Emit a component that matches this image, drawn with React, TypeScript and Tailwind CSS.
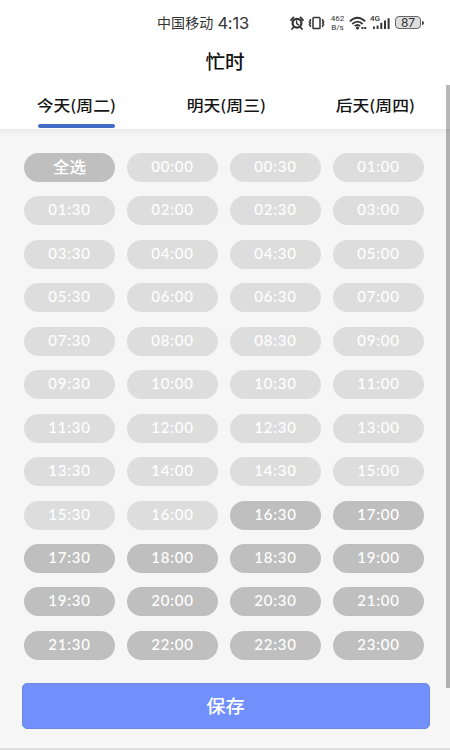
import { useState } from 'react';
import clsx from 'clsx';

const TABS = ['今天(周二)', '明天(周三)', '后天(周四)'];

// Premier créneau encore disponible aujourd'hui (16:30)
const FIRST_FREE = 33;

const SLOTS = Array.from({ length: 47 }, (_, i) => {
  const hour = String(Math.floor(i / 2)).padStart(2, '0');
  return { label: `${hour}:${i % 2 ? '30' : '00'}`, disabled: i < FIRST_FREE };
});

function StatusBar() {
  return (
    <div className="h-[45px] pl-[157px] pr-[26px] flex items-center justify-between text-[#333]">
      <div className="flex items-center gap-[4px] leading-none">
        <span className="mb-[2px] text-[14px] tracking-[0.1px]">中国移动</span>
        <span className="mt-[2px] font-['Inter'] text-[16.5px] tracking-[-0.2px]">4:13</span>
      </div>
      <div className="flex items-center">
        {/* Réveil */}
        <svg className="w-[14px] h-[14px] mr-[4px]" viewBox="0 0 14 14" fill="none" stroke="currentColor" strokeLinecap="round">
          <circle cx="7" cy="7.2" r="4.4" strokeWidth="2.3" />
          <path d="M1 4.2 3.5 1.4M13 4.2 10.5 1.4M3.3 11.5 2 13M10.7 11.5 12 13" strokeWidth="1.8" />
          <path d="M6.6 5v2.6l2.1 1.2" strokeWidth="1.4" />
        </svg>
        {/* Vibreur */}
        <svg className="w-[17px] h-[14px] mr-[5px]" viewBox="0 0 17 14" fill="none" stroke="currentColor" strokeWidth="1.5">
          <rect x="5" y="1.4" width="7" height="11.2" rx=".8" />
          <path d="M2.4 3v1.6l-1 1.2 1 1.2-1 1.2 1 1.2V11M14.6 3v1.6l1 1.2-1 1.2 1 1.2-1 1.2V11" />
        </svg>
        <div className="w-[15px] mr-[4px] font-['Roboto'] text-[8px] leading-[9px] text-center">
          <div>462</div>
          <div>B/s</div>
        </div>
        {/* Wi-Fi */}
        <svg className="w-[18px] h-[14px] mr-[3px]" viewBox="0 0 18 14" fill="none" stroke="currentColor" strokeWidth="1.8">
          <path d="M.8 5.4Q8.5-1.8 16.2 5.4M3.3 8Q8.5 3.2 13.7 8M5.7 10.2Q8.5 7.7 11.3 10.2" />
          <circle cx="8.5" cy="12" r="1.6" fill="currentColor" stroke="none" />
          <path d="M12.4 12h2M15.2 12h2" />
        </svg>
        {/* Réseau mobile */}
        <div className="relative w-[20px] h-[14px] mr-[5px]">
          <span className="absolute left-0 top-[-1px] font-['Roboto'] text-[8px] leading-[8px] font-medium">4G</span>
          <svg className="w-full h-full" viewBox="0 0 20 14" fill="currentColor">
            <path d="M3 10.5h1.9v2.5H3zM6.6 9.5h1.9V13H6.6zM10.3 6.8h2V13h-2zM14 4.5h2V13h-2zM17.6 2.3h2V13h-2z" />
          </svg>
        </div>
        <div className="w-[26px] h-[13px] border-[1.5px] border-[#666] rounded-[4px] bg-[#dedede] flex items-center justify-center font-['Inter'] text-[12px] leading-none">
          87
        </div>
        <div className="w-[2px] h-[4px] ml-px bg-[#444] rounded-r" />
      </div>
    </div>
  );
}

export default function App() {
  const [tab, setTab] = useState(0);
  const [selected, setSelected] = useState<string[]>([]);

  const toggle = (label: string) => {
    setSelected((prev) => (prev.includes(label) ? prev.filter((l) => l !== label) : [...prev, label]));
  };

  const selectAll = () => {
    const free = SLOTS.filter((s) => !s.disabled).map((s) => s.label);
    setSelected(selected.length === free.length ? [] : free);
  };

  return (
    <div className="relative w-[450px] h-[750px] overflow-hidden flex flex-col bg-[#f6f6f6] border-b-2 border-[#dedede] font-['Noto_Sans_CJK_SC',sans-serif]">
      {/* En-tête */}
      <header className="h-[129px] shrink-0 bg-white">
        <StatusBar />
        <h1 className="h-[35px] pb-[2px] flex items-center justify-center text-[19px] font-medium text-[#111]">
          <span className="scale-x-[1.03]">忙时</span>
        </h1>
        <nav className="h-[49px] pl-[38px] pr-[36px] flex justify-between">
          {TABS.map((label, i) => (
            <button key={label} onClick={() => setTab(i)} className="w-[77px] flex flex-col items-center justify-between">
              <span className="mt-[9px] h-[32px] leading-[32px] text-[15px] font-medium text-[#151515] whitespace-nowrap scale-x-[1.12]">{label}</span>
              <span className={clsx('w-full h-[4px] mb-px rounded-full', tab === i && 'bg-[#446cc4]')} />
            </button>
          ))}
        </nav>
      </header>
      <div className="h-[8px] shrink-0 bg-linear-to-b from-[#ededed] to-[#f6f6f6]" />

      {/* Créneaux */}
      <main className="mt-[16px] pl-[24px] pr-[26px] grid grid-cols-4 gap-x-[12px] gap-y-[14.45px] font-['Lato','Noto_Sans_CJK_SC',sans-serif] text-white">
        <button onClick={selectAll} className="h-[29px] pb-px rounded-full bg-[#bfbfbf] text-[15.5px] leading-[28px] font-medium">
          <span className="inline-block scale-x-[1.06]">全选</span>
        </button>
        {SLOTS.map(({ label, disabled }) => (
          <button
            key={label}
            disabled={disabled}
            onClick={() => toggle(label)}
            className={clsx(
              'h-[29px] pb-[2px] rounded-full text-[15px] leading-[27px] font-medium tracking-[0.75px]',
              disabled ? 'bg-[#dddddd]' : selected.includes(label) ? 'bg-[#7190fb]' : 'bg-[#bfbfbf]'
            )}
          >
            {label}
          </button>
        ))}
      </main>

      <button className="mt-[23px] ml-[21.5px] mr-[20.5px] pb-[2px] h-[46px] shrink-0 rounded-[5px] border border-[#6c86dc] bg-[#7190fb] text-white text-[18.5px] font-medium leading-none">
        <span className="inline-block scale-x-[1.04]">保存</span>
      </button>

      {/* Barre de défilement */}
      <div className="absolute right-0 top-[85px] w-[4px] h-[603px] bg-black/28" />
    </div>
  );
}
